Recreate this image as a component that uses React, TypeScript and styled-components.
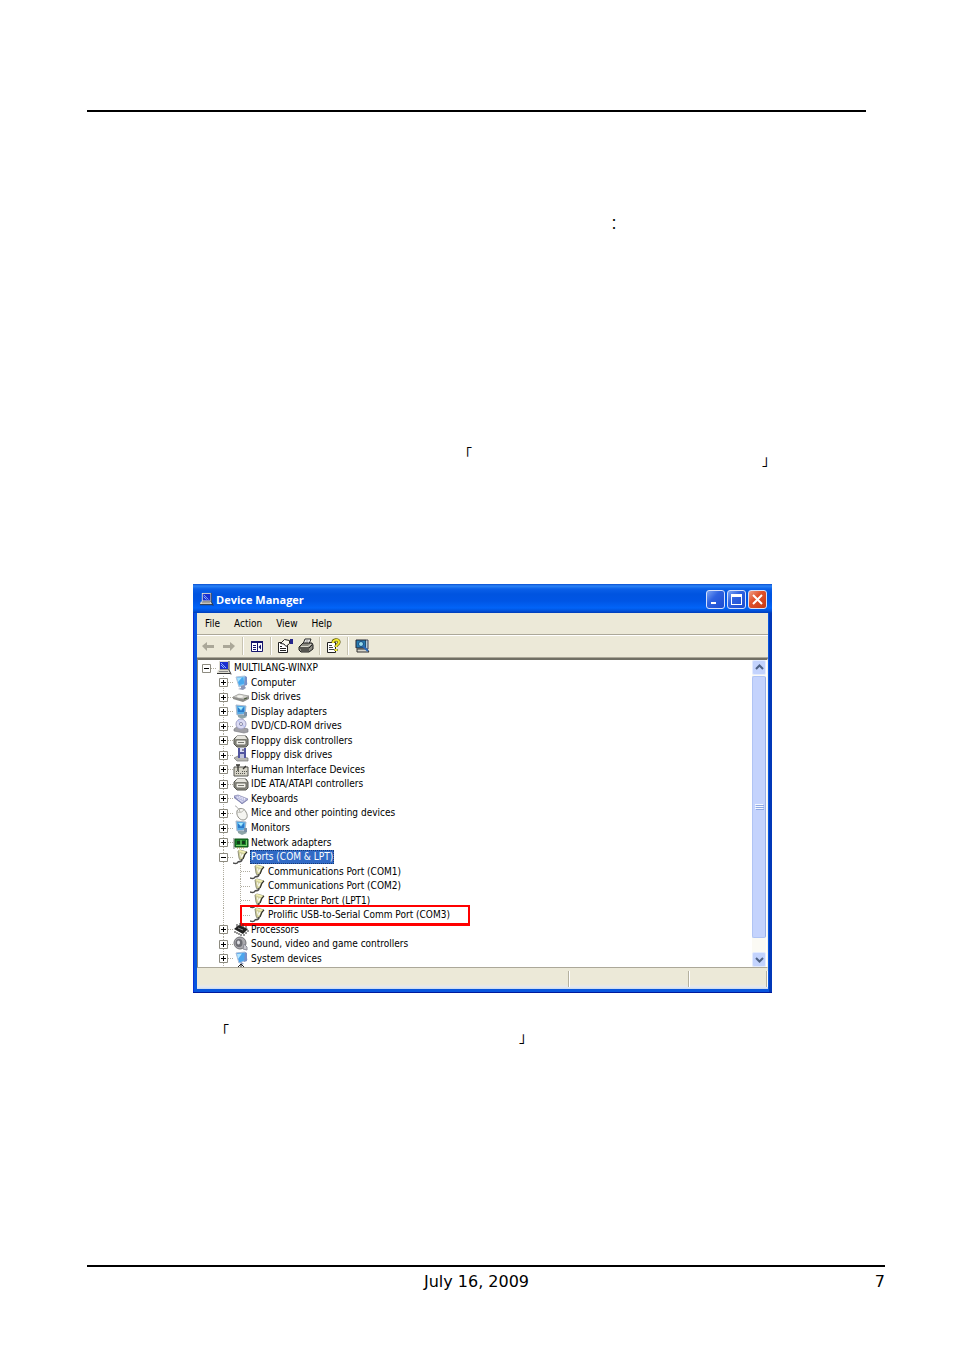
import React from "react";
import styled, { createGlobalStyle, css } from "styled-components";

const GlobalStyle = createGlobalStyle`
  * { box-sizing: border-box; }
  body { margin: 0; background: #fff; color: #000; }
  button { font: inherit; color: inherit; margin: 0; padding: 0; border: 0; background: none; }
`;

const Page = styled.div`
  padding: 110px 69px 52px 87px;
  font-family: "DejaVu Sans", Verdana, sans-serif;
`;

const PageHeader = styled.header`
  margin-right: 19px;
  border-top: 2px solid #000;
`;

const Body = styled.main`
  display: flex;
  flex-direction: column;
  margin-right: 19px;
`;

const Paragraph = styled.p<{ $top: number; $left: number; $right?: number }>`
  display: flex;
  justify-content: space-between;
  margin: ${(p) => p.$top}px ${(p) => p.$right ?? 0}px 0 ${(p) => p.$left}px;
  font-family: "Noto Sans CJK TC", sans-serif;
  font-size: 14px;
  line-height: 20px;
`;

const Closing = styled.span`
  padding-top: 6px;
`;

const PageFooter = styled.footer`
  display: grid;
  grid-template-columns: 1fr auto 1fr;
  margin-top: 219px;
  padding-top: 4px;
  border-top: 2px solid #000;
  font-size: 16px;
  line-height: 22px;
`;

const FooterDate = styled.span`
  grid-column: 2;
  margin-right: 19px;
`;

const PageNumber = styled.span`
  text-align: right;
`;

const Window = styled.section`
  margin: 115px 94px 0 106px;
  padding: 0 4px 3px;
  background: linear-gradient(to right, #0831d9 0 1px, #0855dd 1px calc(100% - 3px), #0138b8 calc(100% - 3px));
  border-bottom: 1px solid #001a9c;
  font-family: "DejaVu Sans Condensed", Tahoma, sans-serif;
  font-size: 10px;
  line-height: 14px;
`;

const TitleBar = styled.header`
  display: flex;
  align-items: center;
  gap: 2px;
  height: 29px;
  margin: 0 -4px;
  padding: 2px 5px 0 6px;
  background: linear-gradient(#0a4fd0 0, #2b83f6 2px, #0a5fe8 5px, #0054e0 10px, #0055e5 17px, #0264f8 24px, #0050d8 27px, #003cb8 29px);
`;

const Title = styled.h1`
  flex: 1;
  margin: 0;
  color: #fff;
  font-family: "Open Sans", "Trebuchet MS", sans-serif;
  font-size: 11px;
  font-weight: 700;
  line-height: 16px;
`;

const CaptionButton = styled.button<{ $close?: boolean }>`
  display: grid;
  place-items: center;
  width: 19px;
  height: 19px;
  border: 1px solid #d5e1fb;
  border-radius: 3px;
  background: ${(p) =>
    p.$close
      ? "linear-gradient(135deg, #f0a088 0, #e0522c 40%, #c63a14 100%)"
      : "linear-gradient(135deg, #7ba4f5 0, #2e62e0 40%, #1c4cd0 100%)"};
`;

const MenuBar = styled.nav`
  display: flex;
  gap: 14px;
  height: 21px;
  padding: 1px 8px 0;
  background: #ece9d8;
  line-height: 18px;
`;

const ToolBar = styled.div`
  display: flex;
  align-items: center;
  gap: 5px;
  height: 24px;
  padding: 0 3px;
  background: #ece9d8;
  border-top: 1px solid #aca899;
  border-bottom: 1px solid #aca899;
  box-shadow: inset 0 1px #fff;
`;

const ToolButton = styled.button`
  display: grid;
  width: 16px;
  height: 16px;
`;

const Divider = styled.span`
  width: 2px;
  height: 18px;
  border-left: 1px solid #c8c4b2;
  border-right: 1px solid #fff;
`;

const Pane = styled.div`
  display: flex;
  border-top: 2px solid #716f64;
  border-left: 1px solid #8a887d;
  border-right: 1px solid #f4f2e8;
  border-bottom: 1px solid #aca899;
  background: #fff;
`;

const Tree = styled.ul`
  flex: 1;
  display: grid;
  grid-template-rows: repeat(21, 1fr);
  height: 307px;
  margin: 0;
  padding: 1px 0 1px 1px;
  list-style: none;
`;

const dots = "repeating-linear-gradient(#b0ada0 0 1px, transparent 1px 2px)";

const Row = styled.li<{ $level: number }>`
  position: relative;
  display: flex;
  align-items: center;
  min-height: 0;
  padding-left: ${(p) => 3 + p.$level * 17}px;
  white-space: nowrap;
  background-repeat: no-repeat;
  ${(p) => p.$level === 1 && css`background-image: ${dots}; background-size: 1px 100%; background-position: 24px 0;`}
  ${(p) =>
    p.$level === 2 &&
    css`background-image: ${dots}, ${dots}; background-size: 1px 100%; background-position: 24px 0, 41px 0;`}
`;

const Expander = styled.button`
  display: grid;
  width: 9px;
  height: 9px;
  background: #fff;
`;

const Branch = styled.span<{ $leaf?: boolean }>`
  width: ${(p) => (p.$leaf ? 9 : 5)}px;
  height: 1px;
  margin-left: ${(p) => (p.$leaf ? 5 : 0)}px;
  background: repeating-linear-gradient(to right, #b0ada0 0 1px, transparent 1px 2px);
`;

const RowIcon = styled.span`
  display: grid;
  width: 16px;
  height: 16px;
  margin: -1px 1px -1px 0;
`;

const Label = styled.span<{ $selected?: boolean }>`
  padding: 0 1px;
  ${(p) => p.$selected && css`color: #fff; background: #316ac5; outline: 1px dotted #173a78; outline-offset: -1px;`}
`;

const Highlight = styled.span`
  position: absolute;
  top: -3px;
  left: 41px;
  width: 230px;
  height: 21px;
  border: 2px solid #f00;
  border-bottom-width: 3px;
`;

const ScrollBar = styled.div`
  display: flex;
  flex-direction: column;
  width: 14px;
  margin-right: 1px;
  background: #fbfaf4;
`;

const ScrollButton = styled.button`
  display: grid;
  place-items: center;
  height: 15px;
  border: 1px solid #e3ebff;
  border-radius: 2px;
  background: #c3d3fd;
`;

const Thumb = styled.div`
  flex: 1;
  display: grid;
  place-items: center;
  margin: 1px 0 14px;
  border: 1px solid #b0c4f4;
  border-right-color: #98b0e8;
  border-radius: 2px;
  background: #c4d3fd;
`;

const StatusBar = styled.footer`
  display: grid;
  grid-template-columns: 1fr 120px 78px;
  height: 21px;
  padding: 3px 1px 2px 0;
  background: linear-gradient(#ece9d8 0 16px, #e6e9ef 19px, #c5d8f2 21px);
`;

const StatusCell = styled.span`
  border-right: 1px solid #b5b19f;
  box-shadow: 1px 0 #fff;
`;

const Svg = ({ children, w = 16, h = 16 }: { children: React.ReactNode; w?: number; h?: number }) => (
  <svg width="100%" height="100%" viewBox={`0 0 ${w} ${h}`} fill="none" aria-hidden="true">
    {children}
  </svg>
);

const icons: Record<string, React.ReactNode> = {
  workstation: (
    <Svg>
      <path d="M3 1h10v9H3z" fill="#dddbd0" />
      <path d="M13 1v9H4" stroke="#444" />
      <path d="M4 2h8v7H4z" fill="#1a2fd0" />
      <path d="M5 3l5 5M5 5l3 3" stroke="#8fb4ff" />
      <path d="M2 10h11l1 3H1z" fill="#dddbd0" />
      <path d="M3 11.500h9" stroke="#888" />
      <path d="M1 13.500h13l1 1M13 10l2 4" stroke="#333" />
    </Svg>
  ),
  computer: (
    <Svg>
      <path d="M3 2l9-1 2 8-8 3z" fill="#7ac4f4" stroke="#b3c3da" />
      <path d="M4 3l6-.5 1.500 6L6 10z" fill="#49a8ee" />
      <path d="M4 3l5-.5L5 7z" fill="#a8e2ff" />
      <path d="M12 1l2 1v8l-3 1z" fill="#7890c8" />
      <path d="M8 11v2l-3 1 5 1 3-2-2-3z" fill="#8b96b8" />
    </Svg>
  ),
  disk: (
    <Svg>
      <path d="M0 8l6-3 10 2v3l-6 3-10-3z" fill="#8c8c88" />
      <path d="M0 8l6-3 10 2-6 3z" fill="#d1d0ca" stroke="#999" strokeWidth=".6" />
      <ellipse cx="7" cy="7.500" rx="3" ry="1.200" fill="#f3f3ef" />
      <path d="M11 10l3-1" stroke="#485a38" />
    </Svg>
  ),
  display: (
    <Svg>
      <path d="M3 1l10 1-1 8-8 1z" fill="#55ace8" stroke="#aab6c9" />
      <path d="M5 3l3 4 3-4v5H5z" fill="#2c78c8" />
      <path d="M5 3l5 0-2 3z" fill="#a7ecff" />
      <path d="M5 11h7l2 2-5 2-4-2z" fill="#8fa4a8" />
      <path d="M11 8h3v4h-3z" fill="#7c90a5" />
    </Svg>
  ),
  dvd: (
    <Svg>
      <path d="M1 11l4-3 10 3v3l-4 1-10-2z" fill="#a0a0a5" stroke="#77777d" strokeWidth=".6" />
      <circle cx="8" cy="6" r="5" fill="#dcdcf4" stroke="#a2a2c6" />
      <path d="M8 6l-3-4M8 6l4 3" stroke="#b0bdf5" />
      <circle cx="8" cy="6" r="1.500" fill="#fff" stroke="#8787aa" />
    </Svg>
  ),
  controller: (
    <Svg>
      <path d="M4 3h9l2 3v6l-2 2H4l-3-3V6z" fill="#8f8f85" stroke="#55554f" />
      <path d="M4 3h8l2 3H2z" fill="#e7e6df" />
      <rect x="3" y="7" width="10" height="5" rx="1" fill="#f1f0e9" stroke="#66665f" />
      <path d="M5 9.500h6" stroke="#77776f" />
    </Svg>
  ),
  floppy: (
    <Svg>
      <path d="M1 11l4-2 10 2v3H4z" fill="#b7b7b3" stroke="#777" strokeWidth=".7" />
      <path d="M5 1h8v10H5z" fill="#5054a0" />
      <path d="M7 1h4v4H7z" fill="#dcdff5" />
      <path d="M7 7h4v4H7z" fill="#c0c3dc" />
      <path d="M10 2v2" stroke="#334" />
    </Svg>
  ),
  hid: (
    <Svg>
      <path d="M1 5h14v9H1z" fill="#d7d5c9" stroke="#55554f" />
      <path d="M3 11.500h10M3 9.500h4M9 9.500h5" stroke="#55554f" strokeDasharray="1 1" />
      <path d="M5 9V3M3 3h4M10 7l3-3" stroke="#33332f" strokeWidth="1.300" />
    </Svg>
  ),
  keyboard: (
    <Svg>
      <path d="M1 5l4-1 10 4-6 5z" fill="#b9bbdf" stroke="#9092b8" strokeWidth=".8" />
      <path d="M4 6l8 3M3 7l7 4M6 5.500l7 2.500" stroke="#f2f2ff" strokeDasharray="1.500 1" />
      <path d="M1 5l8 7 6-4v1l-6 4-8-6z" fill="#8688b4" />
    </Svg>
  ),
  mouse: (
    <Svg>
      <path d="M2 1c3 0 1 3 5 3" stroke="#aaa" />
      <path d="M4 6c1-3 7-4 9 1 3 5 0 8-3 8-4 0-7-5-6-9z" fill="#f5f5f1" stroke="#92928c" />
      <path d="M4 7c4 1 6 0 7-3M7 7l-1-3" stroke="#b4b4ad" />
    </Svg>
  ),
  network: (
    <Svg>
      <path d="M1 3v11" stroke="#777" />
      <path d="M2 4h13v8H2z" fill="#168126" stroke="#0c5217" />
      <path d="M4 6h3v3H4zM9 6h3v3H9z" fill="#123c18" />
      <path d="M3 10.500h11M8 5v5M13.500 5v5" stroke="#77d06c" />
      <path d="M4 13h8" stroke="#a28f20" strokeDasharray="1 1" />
    </Svg>
  ),
  port: (
    <Svg>
      <path d="M5 2l2-1 7 2-2 2-2 5-3 1-1-2z" fill="#d0cf9b" stroke="#7c7c66" strokeWidth=".8" />
      <path d="M5 2l2-1 7 2-2 1.500z" fill="#f1efb1" />
      <path d="M7.500 4.500l1 4M10 5l-1 3" stroke="#fff" />
      <path d="M14 3l-2 2-2 5" stroke="#33332c" strokeWidth="1.200" />
      <path d="M9 10c0 4-3 2-4 3-1 2-2 2-5 1" stroke="#4c4c4c" strokeWidth="1.600" />
    </Svg>
  ),
  processor: (
    <Svg>
      <path d="M1 7l5-4 9 4-5 5z" fill="#222" />
      <path d="M2 9v2M4 10v2M6 11v2M8 12v2M11 12v2M13 10v2M15 8v2M4 2v3M7 1v3M10 2v3M13 4v2" stroke="#333" />
      <path d="M5 6l5 2" stroke="#888" />
    </Svg>
  ),
  sound: (
    <Svg>
      <ellipse cx="7" cy="7" rx="6" ry="6" fill="#aaa9ae" stroke="#727277" />
      <ellipse cx="6" cy="7" rx="3.500" ry="4" fill="#6c6c73" />
      <ellipse cx="5.500" cy="6.500" rx="1.500" ry="2" fill="#e0e0e5" />
      <path d="M11 8l3 3v3l-4-1z" fill="#c8c8cf" stroke="#8d8d99" />
    </Svg>
  ),
  system: (
    <Svg>
      <path d="M3 2l9-1 2 8-8 3z" fill="#4da6ee" stroke="#aabcd8" />
      <path d="M4 3l5-.5L5 8z" fill="#b5e5ff" />
      <path d="M12 1l2 1v8l-3 1z" fill="#7890c8" />
      <path d="M8 11l3 2-4 1z" fill="#8b96b8" />
      <path d="M5 16l3-3 3 3M8 13v3" stroke="#222" />
    </Svg>
  ),
  back: (
    <Svg>
      <path d="M2 8l5-4v3h7v3H7v3z" fill="#aaa798" />
    </Svg>
  ),
  forward: (
    <Svg>
      <path d="M14 8L9 4v3H2v3h7v3z" fill="#aaa798" />
    </Svg>
  ),
  pane: (
    <Svg>
      <path d="M2.500 3.500h11v10h-11z" fill="#fff" stroke="#16166e" />
      <path d="M2 4h12" stroke="#16166e" strokeWidth="2" />
      <path d="M8.500 4v9" stroke="#16166e" />
      <path d="M4 7.500h3M4 9.500h3M4 11.500h3" stroke="#16166e" />
      <path d="M12 6.500v5L9.500 9z" fill="#16166e" />
    </Svg>
  ),
  properties: (
    <Svg>
      <path d="M1.500 4.500h9v10h-9z" fill="#fff" stroke="#222" />
      <path d="M3 8.500h2M3 10.500h6M3 12.500h6" stroke="#222" />
      <path d="M3.500 5.500l4-4 5 1v3L9 8.500 7 6z" fill="#fbfaf0" stroke="#222" />
      <path d="M13 1h3v5h-3z" fill="#25258c" />
    </Svg>
  ),
  print: (
    <Svg>
      <path d="M5 6l2-5h6l-2 5z" fill="#fff" stroke="#222" />
      <path d="M7.500 3h3M7 5h3" stroke="#777" />
      <path d="M1 9l4-4h9l1 2v4l-4 3H3l-2-2z" fill="#8c8b82" stroke="#1d1d1d" />
      <path d="M3 8.500h7l3-2.500" stroke="#dddbd0" />
      <path d="M2 10h9l3-3M3 12h8" stroke="#222" />
    </Svg>
  ),
  help: (
    <Svg>
      <path d="M1.500 4.500h8v10h-8z" fill="#fff" stroke="#222" />
      <path d="M3 7.500h3M3 9.500h4M3 11.500h5" stroke="#444" />
      <path d="M7 5c0-4 6-4 6-1 0 3-3 2-3 5M10 11v2" stroke="#5b5700" strokeWidth="3.200" />
      <path d="M7 5c0-4 6-4 6-1 0 3-3 2-3 5M10 11v2" stroke="#f0e72d" strokeWidth="2" />
    </Svg>
  ),
  scan: (
    <Svg>
      <path d="M2 2h10v8H2z" fill="#267cb0" stroke="#223" />
      <path d="M3 11h10l2 3H3z" fill="#d7d5cb" stroke="#333" />
      <path d="M12 2h2v9h-2" fill="#b5cbd9" stroke="#445" />
      <circle cx="7" cy="6" r="2.500" fill="#98dbed" stroke="#174982" />
      <path d="M9 8l5 5" stroke="#2a68b8" strokeWidth="2" />
    </Svg>
  ),
};

type Node = { label: string; icon: string; level: number; state?: "open" | "closed"; selected?: boolean; marked?: boolean };

const closed = (label: string, icon: string): Node => ({ label, icon, level: 1, state: "closed" });
const port = (label: string, marked = false): Node => ({ label, icon: "port", level: 2, marked });

const nodes: Node[] = [
  { label: "MULTILANG-WINXP", icon: "workstation", level: 0, state: "open" },
  closed("Computer", "computer"),
  closed("Disk drives", "disk"),
  closed("Display adapters", "display"),
  closed("DVD/CD-ROM drives", "dvd"),
  closed("Floppy disk controllers", "controller"),
  closed("Floppy disk drives", "floppy"),
  closed("Human Interface Devices", "hid"),
  closed("IDE ATA/ATAPI controllers", "controller"),
  closed("Keyboards", "keyboard"),
  closed("Mice and other pointing devices", "mouse"),
  closed("Monitors", "display"),
  closed("Network adapters", "network"),
  { label: "Ports (COM & LPT)", icon: "port", level: 1, state: "open", selected: true },
  port("Communications Port (COM1)"),
  port("Communications Port (COM2)"),
  port("ECP Printer Port (LPT1)"),
  port("Prolific USB-to-Serial Comm Port (COM3)", true),
  closed("Processors", "processor"),
  closed("Sound, video and game controllers", "sound"),
  closed("System devices", "system"),
];

const TreeRow = ({ node }: { node: Node }) => (
  <Row $level={node.level} role="treeitem" aria-level={node.level + 1} aria-selected={!!node.selected}>
    {node.state ? (
      <>
        <Expander aria-label={`${node.state === "open" ? "Collapse" : "Expand"} ${node.label}`}>
          <Svg w={9} h={9}>
            <path d="M.5.5h8v8h-8z" stroke="#8d8b80" />
            <path d={node.state === "open" ? "M2 4.500h5" : "M2 4.500h5M4.500 2v5"} stroke="#000" />
          </Svg>
        </Expander>
        <Branch />
      </>
    ) : (
      <Branch $leaf />
    )}
    <RowIcon>{icons[node.icon]}</RowIcon>
    <Label $selected={node.selected}>{node.label}</Label>
    {node.marked && <Highlight />}
  </Row>
);

const Tool = ({ name, label }: { name: string; label: string }) => (
  <ToolButton aria-label={label}>{icons[name]}</ToolButton>
);

const TitleIcon = styled.span`
  display: grid;
  width: 15px;
  height: 15px;
`;

const Glyph = ({ d, color = "#fff", width = 2 }: { d: string; color?: string; width?: number }) => (
  <svg width="13" height="13" viewBox="0 0 13 13" fill="none" aria-hidden="true">
    <path d={d} stroke={color} strokeWidth={width} />
  </svg>
);

export default function App() {
  return (
    <>
      <GlobalStyle />
      <Page>
        <PageHeader />
        <Body>
          <Paragraph $top={101} $left={520}>：</Paragraph>
          <Paragraph $top={210} $left={371} $right={90}>
            <span>「</span>
            <Closing>」</Closing>
          </Paragraph>
          <Window aria-label="Device Manager">
            <TitleBar>
              <TitleIcon>{icons.workstation}</TitleIcon>
              <Title>Device Manager</Title>
              <CaptionButton aria-label="Minimize"><Glyph d="M2 10h5" /></CaptionButton>
              <CaptionButton aria-label="Maximize">
                <svg width="13" height="13" viewBox="0 0 13 13" fill="none" aria-hidden="true">
                  <path d="M1 1h11v11H1zM2 4v7h9V4z" fill="#fff" fillRule="evenodd" />
                </svg>
              </CaptionButton>
              <CaptionButton aria-label="Close" $close><Glyph d="M2 2l9 9M11 2l-9 9" /></CaptionButton>
            </TitleBar>
            <MenuBar>
              <button>File</button>
              <button>Action</button>
              <button>View</button>
              <button>Help</button>
            </MenuBar>
            <ToolBar>
              <Tool name="back" label="Back" />
              <Tool name="forward" label="Forward" />
              <Divider />
              <Tool name="pane" label="Show or hide console tree" />
              <Divider />
              <Tool name="properties" label="Properties" />
              <Tool name="print" label="Print" />
              <Divider />
              <Tool name="help" label="Help" />
              <Divider />
              <Tool name="scan" label="Scan for hardware changes" />
            </ToolBar>
            <Pane>
              <Tree role="tree">
                {nodes.map((node) => (
                  <TreeRow key={node.label} node={node} />
                ))}
              </Tree>
              <ScrollBar>
                <ScrollButton aria-label="Scroll up"><Glyph d="M3 8l3.500-3.500L10 8" color="#4d6185" /></ScrollButton>
                <Thumb>
                  <svg width="13" height="13" viewBox="0 0 13 13" fill="none" aria-hidden="true">
                    <path d="M2 3.500h8M2 5.500h8M2 7.500h8" stroke="#f4f8ff" />
                    <path d="M3 4.500h8M3 6.500h8M3 8.500h8" stroke="#8ea8e4" />
                  </svg>
                </Thumb>
                <ScrollButton aria-label="Scroll down"><Glyph d="M3 5l3.500 3.500L10 5" color="#4d6185" /></ScrollButton>
              </ScrollBar>
            </Pane>
            <StatusBar>
              <StatusCell />
              <StatusCell />
              <StatusCell />
            </StatusBar>
          </Window>
          <Paragraph $top={27} $left={128} $right={333}>
            <span>「</span>
            <Closing>」</Closing>
          </Paragraph>
        </Body>
        <PageFooter>
          <FooterDate>July 16, 2009</FooterDate>
          <PageNumber>7</PageNumber>
        </PageFooter>
      </Page>
    </>
  );
}
